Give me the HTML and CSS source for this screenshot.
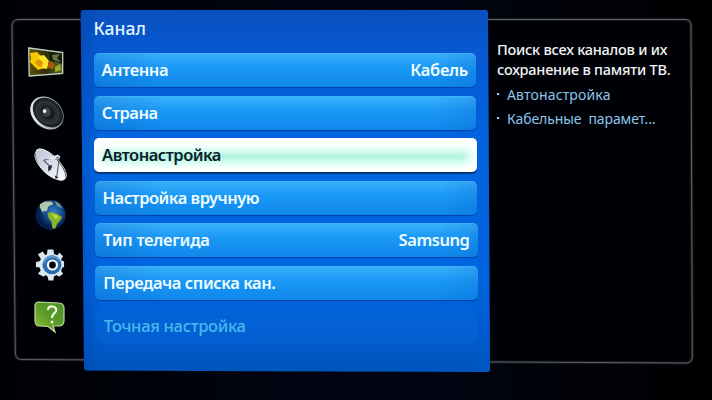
FILE: index.html
```html
<!DOCTYPE html>
<html lang="ru">
<head>
<meta charset="utf-8">
<title>Канал</title>
<link rel="stylesheet" href="styles.css">
</head>
<body>
<main class="screen">
  <svg class="frame" viewBox="0 0 712 400" aria-hidden="true">
    <path d="M19 19.5H685Q691 19.5 691 26L692.3 356Q692.3 363 686 363L22 359.5Q15.500 359.500 15.300 353L12 26Q12 19.500 19 19.500Z" fill="#000106" stroke="#17191d" stroke-width="3"/>
    <path d="M19 19.500H685Q691 19.500 691 26L692.300 356Q692.300 363 686 363L22 359.500Q15.500 359.500 15.300 353L12 26Q12 19.500 19 19.500Z" fill="none" stroke="#5c6065"/>
  </svg>
  <nav class="rail">
    <svg class="icon picture" viewBox="0 0 36 30">
      <defs><linearGradient id="leaf"><stop stop-color="#605408"/><stop offset=".5" stop-color="#302d05"/><stop offset="1" stop-color="#56722a"/></linearGradient></defs>
      <path d="M.5.500 35 5V27L1 29.500Z" fill="url(#leaf)"/>
      <path d="M20 4 34 6V17L27 14 23 17Z" fill="#171b09"/>
      <path d="m24 8 8-1-3 4 4 4-8-2Z" fill="#637844"/>
      <path d="M2 6 9 5l4 4 5 2 2 5-4 5-6 2-4-4-4-4 1-4Z" fill="#f5c900"/>
      <path d="m11 9 5-1 5 6-2 8-6-1-2-6Z" fill="#ffe32b"/>
      <path d="m7 15 4-3 4 3-1 5-4-1Z" fill="#df9600"/>
      <path d="m20 15 4-1 3 4-2 4-5-1Z" fill="#a65a0a"/>
      <path d="m27 20 5-3 1 6-6 2Z" fill="#9bab27"/>
      <path d="M.7 1 34.700 5.500V26.500L1.200 29Z" fill="none" stroke="#c4ccc6" stroke-width="1.300"/>
    </svg>
    <svg class="icon speaker" viewBox="0 0 36 36">
      <defs><linearGradient id="rim" x1="0" y1="1" x2="1" y2="0"><stop stop-color="#fff"/><stop offset=".6" stop-color="#a4aaae"/><stop offset="1" stop-color="#71777b"/></linearGradient></defs>
      <g transform="rotate(43 18 18)"><ellipse cx="18" cy="18" rx="19.500" ry="15.500" fill="url(#rim)"/><ellipse cx="18.400" cy="17" rx="17.800" ry="13.600" fill="#202326"/><ellipse cx="18" cy="17.500" rx="13" ry="10.500" fill="#292d31" stroke="#454a4e" stroke-width=".7"/><ellipse cx="18" cy="17" rx="8" ry="6.500" fill="#17191c"/></g>
      <ellipse cx="17.500" cy="17" rx="4.500" ry="5" fill="#3e4245"/><circle cx="15.500" cy="16" r="2" fill="#f1f3f4"/>
    </svg>
    <svg class="icon dish" viewBox="0 0 36 38">
      <defs><linearGradient id="dishFill" x2="1" y2="1"><stop stop-color="#bcc4d2"/><stop offset=".55" stop-color="#dbe0ec"/><stop offset="1" stop-color="#fff"/></linearGradient></defs>
      <path d="M3 3C-2 12 10 32 27 35C36 37 35 28 27 17C19 6 8-2 3 3Z" fill="url(#dishFill)"/>
      <path d="M3 3C9 0 22 7 30 20 36 28 36 36 27 35 15 32 1 19 1 8Z" fill="none" stroke="#eef1f7"/>
      <path d="m10 14 17-4M27 10l-3 22M10 14l9 8" fill="none" stroke="#555e70" stroke-width="1.200"/>
      <path d="m15 20 4-1-1 5-3 2ZM22 30l4 2-3 2Z" fill="#2c3242"/><path d="m13 13 12-5 3 2-2 3Z" fill="#e5e9f3"/><path d="m24 10 3 0-1 3-4 1" fill="#8c95a6"/>
    </svg>
    <svg class="icon globe" viewBox="0 0 32 32">
      <defs><radialGradient id="sea" cx=".6" cy=".4"><stop stop-color="#397fc8"/><stop offset=".55" stop-color="#164e91"/><stop offset="1" stop-color="#041f4e"/></radialGradient></defs>
      <circle cx="16" cy="16" r="15.500" fill="url(#sea)"/>
      <path d="M5 5 10 2l7 0 2 3-5 2-2 5-4 0 2 3-3-3-2-4Z" fill="#afc8aa"/>
      <path d="m20 1 5 3 3 5-5-2Z" fill="#6f9991"/>
      <path d="m13 14 4-1 6 2 5 3-2 4-3 3-2 5-3 0-1-7-3-4Z" fill="#85b72b"/>
      <path d="m17 15 5 1 3 3-4 1Z" fill="#bad84a"/>
    </svg>
    <svg class="icon gear" viewBox="0 0 32 34">
      <g fill="#dce6ef"><path d="m13 1 6 0 1 7-8 0ZM12 26h8l-1 7h-5ZM1 14l8-2v8l-8-1ZM24 12l6 1v6l-6 2ZM3 6l5-3 5 7-5 4ZM22 9l3-5 4 4-4 6ZM3 26l5-6 5 5-4 4ZM20 26l5-6 4 6-4 3Z"/><circle cx="16.500" cy="17" r="12"/></g>
      <circle cx="17.500" cy="16.800" r="9.800" fill="#286caf"/><path d="M9 15A9 9 0 0 1 25 12" fill="none" stroke="#5da1d5" stroke-width="2"/>
      <circle cx="18" cy="17" r="5.800" fill="#f7fafb"/><circle cx="18" cy="17" r="3.500" fill="#05080e"/>
    </svg>
    <svg class="icon help" viewBox="0 0 31 32">
      <defs><linearGradient id="bubble" x1="1" x2="0" y2="1"><stop stop-color="#4d9029"/><stop offset=".5" stop-color="#599b28"/><stop offset="1" stop-color="#91bf35"/></linearGradient></defs>
      <path d="M5 1 25 2Q29.500 2 30 7L30 20Q29.500 25 25 25L19 25 21 31 14 25.500 5 25Q1.500 25 1 20L1 5Q1 1 5 1Z" fill="url(#bubble)" stroke="#bbdc9a" stroke-width="1.200"/>
      <path d="M14 9Q14 5 18.500 5.500 23 6 22 10C21 13 18 12 18 17" fill="none" stroke="#f0fae1" stroke-width="2.200"/><circle cx="18" cy="21" r="1.500" fill="#f0fae1"/>
    </svg>
  </nav>
  <section class="panel">
    <h1 class="title">Канал</h1>
    <ul class="menu">
      <li class="row"><span class="w-antenna">Антенна</span><span class="w-cable">Кабель</span></li>
      <li class="row"><span class="w-country">Страна</span></li>
      <li class="row selected"><span class="w-auto">Автонастройка</span></li>
      <li class="row"><span class="w-manual">Настройка вручную</span></li>
      <li class="row"><span class="w-guide">Тип телегида</span><span class="w-samsung">Samsung</span></li>
      <li class="row"><span class="w-transfer">Передача списка кан.</span></li>
      <li class="row disabled"><span class="w-fine">Точная настройка</span></li>
    </ul>
  </section>
  <aside class="info">
    <p class="description">Поиск всех каналов и их<br>сохранение в памяти ТВ.</p>
    <ul class="hints">
      <li><span class="w-hint">Автонастройка</span></li>
      <li><span class="w-params">Кабельные&nbsp; парамет...</span></li>
    </ul>
  </aside>
</main>
</body>
</html>
```
FILE: styles.css
```css
* { box-sizing: border-box; }
body { margin: 0; background: #010206; }
ul, p, h1 { margin: 0; padding: 0; list-style: none; }
.screen {
  position: relative;
  display: grid;
  grid-template-columns: 80px 411px 1fr;
  width: 712px;
  height: 400px;
  overflow: hidden;
  background: linear-gradient(90deg, #000105, #010514 55%, #010207 85%, #000);
  font-family: "Noto Sans", "Open Sans", sans-serif;
  white-space: nowrap;
}
.frame { position: absolute; inset: 0; width: 712px; height: 400px; }
.rail { position: relative; padding-top: 47px; }
.icon { display: block; overflow: visible; }
.picture { width: 36px; height: 30px; margin-left: 28px; }
.speaker { width: 34px; height: 34px; margin: 19px 0 0 30px; }
.dish { width: 34px; height: 36px; margin: 17px 0 0 34px; }
.globe { width: 31px; height: 32px; margin: 16px 0 0 35px; }
.gear { width: 31px; height: 34px; margin: 17px 0 0 35px; }
.help { width: 31px; height: 32px; margin: 19px 0 0 34px; }
.panel {
  position: relative;
  height: 363px;
  margin-top: 10px;
  padding: 5px 0 0 13.500px;
  clip-path: path("M4 0 L405 0 Q408 0 408 3 L410 359 Q410 362 407 362 L7 360.500 Q4 360.500 4 357 L.7 3 Q.7 0 4 0 Z");
  background:
    linear-gradient(90deg, #0040a570, transparent 5% 96%, #0058d060),
    linear-gradient(#0a50bd, #0759d3 12%, #0066e0 38%, #0065e1 75%, #0054bd);
}
.title { height: 38px; font-size: 17.500px; line-height: 26px; font-weight: 500; color: #e0f6ff; }
.menu { display: grid; grid-auto-rows: 34px; gap: 8.600px; }
.row {
  display: flex;
  justify-content: space-between;
  align-items: center;
  width: 382.500px;
  padding: 0 8px;
  border-radius: 5px;
  background: linear-gradient(90deg, #0645b438, transparent 18% 90%, #0754bc30), linear-gradient(#39b2fb, #1b99f6 42%, #0f87ec);
  box-shadow: 0 1px 1px #0041a5, inset 0 1px #4cb8fa70;
  color: #eefcff;
  font-size: 16.500px;
  line-height: 24px;
  font-weight: 600;
}
.row:nth-child(2) { margin-left: .3px; }
.row:nth-child(3) { margin-left: .6px; }
.row:nth-child(4) { margin-left: 1px; }
.row:nth-child(5) { margin-left: 1.500px; }
.row:nth-child(6) { margin-left: 1.800px; }
.row:nth-child(7) { margin-left: 2.200px; }
.row.selected {
  background: linear-gradient(90deg, #fff, transparent 4% 96%, #fff), linear-gradient(#fff 0%, #f2fffc 25%, #b3f2e0 55%, #dcfff5 75%, #fff 92%);
  box-shadow: 0 2px 1px #073579;
  color: #071f2b;
}
.row.disabled { background: #096ade50; box-shadow: none; color: #48b9ef; font-weight: 500; }
.w-antenna { letter-spacing: -.45px; }
.w-cable { letter-spacing: -.3px; }
.w-country { letter-spacing: -.5px; }
.w-auto { letter-spacing: -.5px; }
.w-manual { letter-spacing: -.5px; }
.w-guide { letter-spacing: -.25px; }
.w-samsung { letter-spacing: -.45px; }
.w-transfer { letter-spacing: -.43px; }
.w-fine { letter-spacing: -.3px; }
.info { position: relative; padding: 39px 0 0 6px; color: #f2f4f6; }
.description { font-size: 14.500px; line-height: 20px; font-weight: 500; letter-spacing: -.22px; }
.hints { margin-top: 4px; color: #8bc5ea; font-size: 14px; line-height: 24px; }
.w-hint { letter-spacing: .15px; }
.w-params { letter-spacing: -.1px; }
.hints li { display: flex; align-items: center; gap: 8px; }
.hints li::before { content: ""; width: 2px; height: 2px; margin-top: -3px; background: #a5d9ef; }
```
